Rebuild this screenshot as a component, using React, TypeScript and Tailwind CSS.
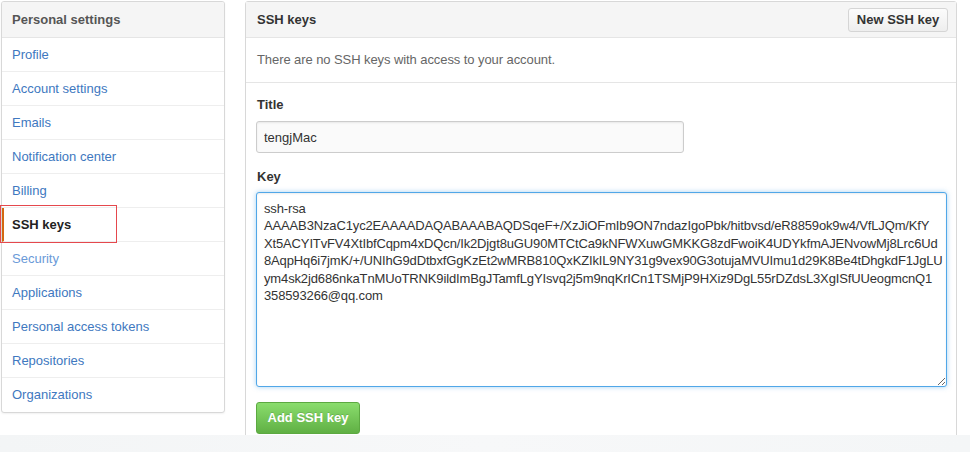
import React from "react";

const navItems = [
  "Profile",
  "Account settings",
  "Emails",
  "Notification center",
  "Billing",
  "SSH keys",
  "Security",
  "Applications",
  "Personal access tokens",
  "Repositories",
  "Organizations",
];

const keyText = [
  "ssh-rsa",
  "AAAAB3NzaC1yc2EAAAADAQABAAABAQDSqeF+/XzJiOFmIb9ON7ndazIgoPbk/hitbvsd/eR8859ok9w4/VfLJQm/KfY",
  "Xt5ACYITvFV4XtIbfCqpm4xDQcn/Ik2Djgt8uGU90MTCtCa9kNFWXuwGMKKG8zdFwoiK4UDYkfmAJENvowMj8Lrc6Ud",
  "8AqpHq6i7jmK/+/UNIhG9dDtbxfGgKzEt2wMRB810QxKZIkIL9NY31g9vex90G3otujaMVUImu1d29K8Be4tDhgkdF1JgLU",
  "ym4sk2jd686nkaTnMUoTRNK9ildImBgJTamfLgYIsvq2j5m9nqKrICn1TSMjP9HXiz9DgL55rDZdsL3XgISfUUeogmcnQ1",
  "358593266@qq.com",
].join("\n");

export default function App() {
  return (
    <div
      className="relative flex h-[452px] w-[970px] flex-col overflow-hidden bg-white text-[13px] text-[#333]"
      style={{ fontFamily: '"Liberation Sans", Arial, Helvetica, sans-serif' }}
    >
      <div className="flex h-[435px] shrink-0 overflow-hidden pl-[1px] pt-[1px]">
        {/* Sidebar */}
        <div className="relative w-[224px] shrink-0 self-start">
          <nav className="overflow-hidden rounded-[3px] border border-[#d8d8d8] bg-white shadow-[0_1px_2px_rgba(0,0,0,0.06)]">
            <div className="flex h-[36px] items-center border-b border-[#e5e5e5] bg-[#f5f5f5] px-[10px] font-bold text-[#555]">
              Personal settings
            </div>
            {navItems.map((item, i) => {
              const selected = item === "SSH keys";
              const last = i === navItems.length - 1;
              return (
                <div
                  key={item}
                  className={
                    "flex h-[34px] items-center px-[10px] " +
                    (last ? "" : "border-b border-[#eee] ") +
                    (selected
                      ? "border-l-2 border-l-[#d26911] pl-[8px] font-bold text-[#222]"
                      : item === "Security"
                      ? "text-[#6a9ad8]"
                      : "text-[#4078c0]")
                  }
                >
                  {item}
                </div>
              );
            })}
          </nav>
          {/* annotation rectangle */}
          <div className="pointer-events-none absolute left-[-1px] top-[204px] h-[38px] w-[117px] border border-[#e5484d]" />
        </div>

        {/* Main panel */}
        <div className="ml-[20px] w-[712px] shrink-0 self-start rounded-[3px] border border-[#d8d8d8] bg-white">
          <div className="flex h-[36px] items-center justify-between border-b border-[#e5e5e5] bg-[#f5f5f5] pl-[11px] pr-[8px]">
            <span className="font-bold text-[#333]">SSH keys</span>
            <button className="h-[24px] w-[100px] rounded-[3px] border border-[#d5d5d5] bg-gradient-to-b from-[#fcfcfc] to-[#eeeeee] text-center text-[13px] font-bold leading-[22px] text-[#333]">
              New SSH key
            </button>
          </div>
          <div className="flex h-[45px] items-center border-b border-[#e5e5e5] px-[11px] tracking-[-0.08px] text-[#666]">
            There are no SSH keys with access to your account.
          </div>
          <div className="px-[10px] pt-[13px] pb-[20px]">
            <div className="mb-[7px] h-[18px] pl-[1px] font-bold leading-[18px] text-[#333]">Title</div>
            <input
              readOnly
              value="tengjMac"
              className="block h-[32px] w-[428px] rounded-[3px] border border-[#ccc] bg-[#fafafa] px-[7px] text-[13px] text-[#333] shadow-[inset_0_1px_2px_rgba(0,0,0,0.075)] outline-none"
              style={{ fontFamily: '"Liberation Sans", Arial, sans-serif' }}
            />
            <div className="mb-[6px] mt-[15px] h-[18px] pl-[1px] font-bold leading-[18px] text-[#333]">Key</div>
            <textarea
              readOnly
              value={keyText}
              wrap="off"
              className="block h-[195px] w-[691px] resize overflow-hidden whitespace-pre rounded-[3px] border border-[#51a7e8] bg-white px-[7px] pt-[7px] text-[13px] leading-[17.4px] tracking-[-0.14px] text-[#333] shadow-[inset_0_1px_2px_rgba(0,0,0,0.075),0_0_5px_rgba(81,167,232,0.5)] outline-none"
              style={{ fontFamily: '"Liberation Sans", Arial, sans-serif' }}
            />
            <button className="mt-[15px] h-[32px] w-[104px] rounded-[3px] border border-[#5ca941] bg-gradient-to-b from-[#8add6d] to-[#60b044] text-center text-[13px] font-bold text-white [text-shadow:0_-1px_0_rgba(0,0,0,0.15)]">
              Add SSH key
            </button>
          </div>
        </div>
      </div>
      <div className="flex-1 bg-gradient-to-r from-[#f3f5f6] via-[#f7f8f9] to-[#f4f6f7]" />
    </div>
  );
}
